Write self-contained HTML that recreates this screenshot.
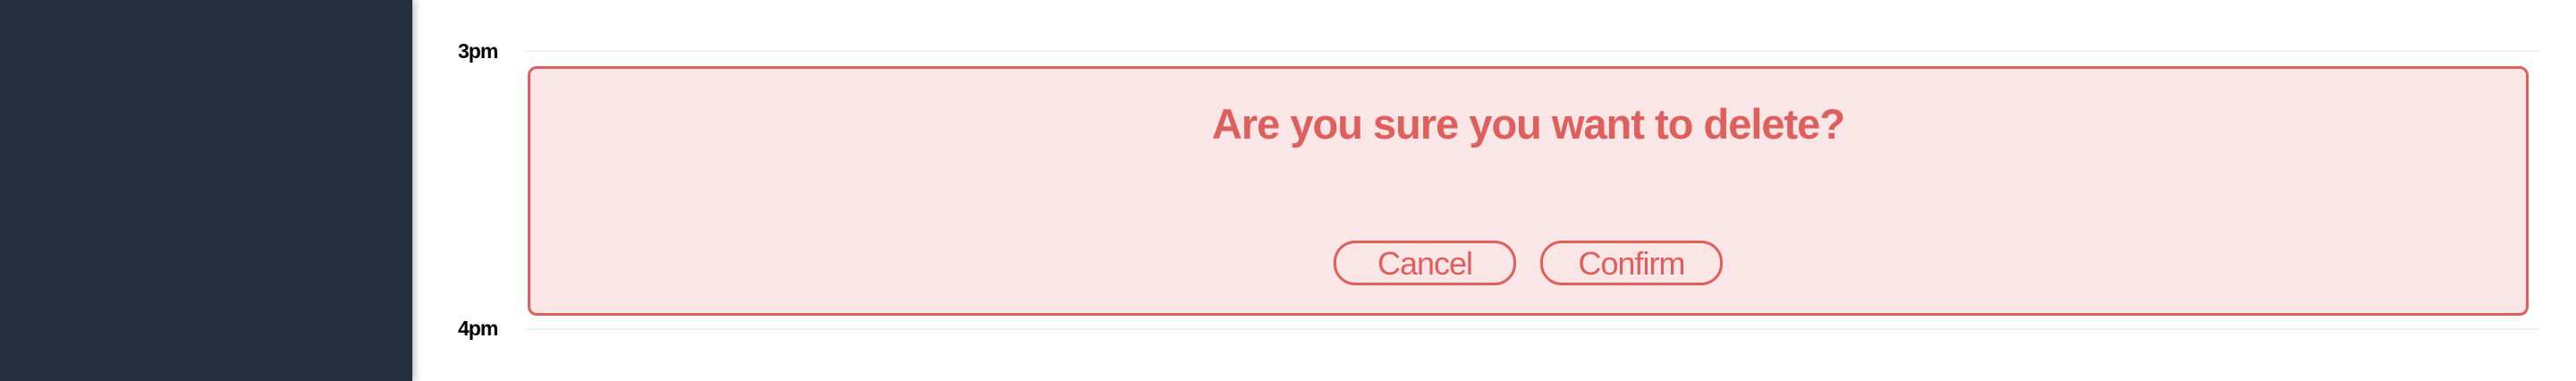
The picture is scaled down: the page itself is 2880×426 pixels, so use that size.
<!DOCTYPE html>
<html><head><meta charset="utf-8"><style>
html,body{margin:0;padding:0;width:2880px;height:426px;overflow:hidden;background:#fff;font-family:"Liberation Sans",sans-serif}
.side{position:absolute;left:0;top:0;width:461px;height:426px;background:#252f3e;box-shadow:3px 0 8px rgba(0,0,0,.25)}
.t{position:absolute;left:512px;font-weight:bold;font-size:23px;color:#000;letter-spacing:-1px}
.line{position:absolute;left:587px;right:40px;height:2px;background:#f0f0f0}
.box{position:absolute;left:590px;top:74px;width:2231px;height:273px;background:#fae6e6;border:3px solid #df5f5c;border-radius:10px}
.title{position:absolute;left:0;right:0;top:34px;text-align:center;font-weight:bold;font-size:47px;color:#df5f5c;letter-spacing:-1px}
.btn{position:absolute;top:192px;width:198px;height:44px;border:3px solid #df5f5c;border-radius:24px;color:#df5f5c;font-size:36px;text-align:center;line-height:46px;letter-spacing:-1px}
</style></head><body>
<div class="side"></div>
<div class="t" style="top:44px">3pm</div>
<div class="line" style="top:56px"></div>
<div class="t" style="top:354px">4pm</div>
<div class="line" style="top:367px"></div>
<div class="box">
<div class="title">Are you sure you want to delete?</div>
<div class="btn" style="left:898px">Cancel</div>
<div class="btn" style="left:1129px">Confirm</div>
</div>
</body></html>
